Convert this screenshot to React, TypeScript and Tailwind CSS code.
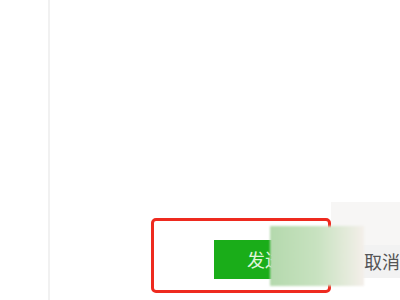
import React from "react";

export default function App() {
  return (
    <div className="relative w-[400px] h-[300px] overflow-hidden bg-white font-['Noto_Sans_CJK_SC',sans-serif]">
      <div className="flex h-full">
        {/* left divider */}
        <div className="w-[48px] shrink-0" />
        <div className="w-[2px] h-full bg-[#f1f1f1] shrink-0" />

        {/* content */}
        <div className="flex-1 flex flex-col">
          <div className="flex-1" />
          <div className="flex items-start h-[60px] pl-[164px] gap-[40px]">
            <button className="w-[88px] h-[39px] bg-[#1aad19] text-[#dff5d9] text-[18px] flex items-center pl-[33px]">
              发送
            </button>
            <button className="w-[80px] h-[33px] mt-[5px] bg-[#f2f2f2] text-[#555] text-[18px] flex items-center pl-[22px]">
              取消
            </button>
          </div>
        </div>
      </div>

      {/* light patch top right */}
      <div className="absolute left-[331px] top-[202px] w-[69px] h-[43px] bg-[#f7f6f5]" />

      {/* red annotation box */}
      <div className="absolute left-[151px] top-[218px] w-[180px] h-[75px] border-[3px] border-[#ee2a1f] rounded-[5px]" />

      {/* blurred mosaic patch */}
      <div className="absolute left-[270px] top-[226px] w-[94px] h-[60px] bg-gradient-to-r from-[#b4d9ad] via-[#c8e2c0] to-[#f4efea] blur-[1px]" />
    </div>
  );
}
